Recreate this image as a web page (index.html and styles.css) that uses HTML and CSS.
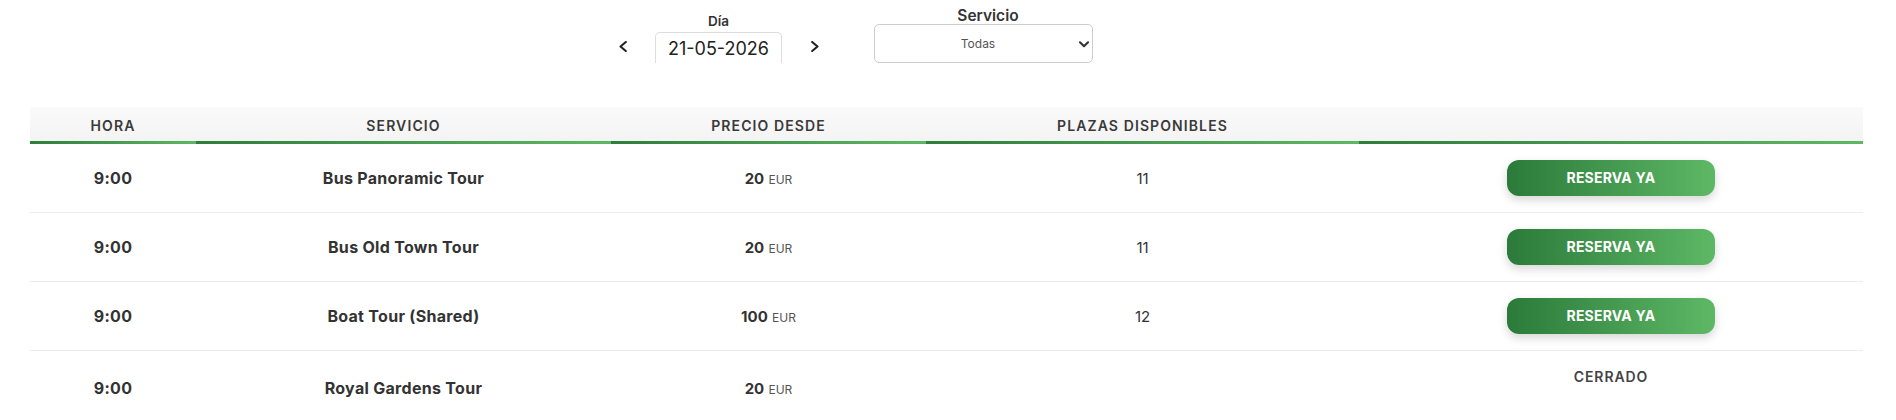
FILE: index.html
```html
<!DOCTYPE html>
<html lang="es">
<head>
<meta charset="utf-8">
<title>Horarios</title>
<link rel="stylesheet" href="styles.css">
</head>
<body>
<div class="filters">
  <div class="day">
    <svg class="arrow" viewBox="0 0 8 11" width="8" height="11"><path d="M6.8 1 L1.5 5.5 L6.8 10" fill="none" stroke="#222" stroke-width="2.1" stroke-linecap="round" stroke-linejoin="round"/></svg>
    <div class="day-col">
      <div class="day-label">Día</div>
      <div class="date-box">21-05-2026</div>
    </div>
    <svg class="arrow" viewBox="0 0 8 11" width="8" height="11"><path d="M1.2 1 L6.5 5.5 L1.2 10" fill="none" stroke="#222" stroke-width="2.1" stroke-linecap="round" stroke-linejoin="round"/></svg>
  </div>
  <div class="service-col">
    <div class="service-label">Servicio</div>
    <div class="select">
      <span class="select-text">Todas</span>
      <svg class="chev" viewBox="0 0 12 7" width="12" height="7"><path d="M2 1.3 L6 5.2 L10 1.3" fill="none" stroke="#333" stroke-width="2.1" stroke-linecap="round" stroke-linejoin="round"/></svg>
    </div>
  </div>
</div>

<table class="schedule">
  <colgroup>
    <col class="c-hora"><col class="c-serv"><col class="c-precio"><col class="c-plazas"><col class="c-accion">
  </colgroup>
  <thead>
    <tr>
      <th>Hora</th>
      <th>Servicio</th>
      <th>Precio desde</th>
      <th>Plazas disponibles</th>
      <th></th>
    </tr>
  </thead>
  <tbody>
    <tr>
      <td class="bold">9:00</td>
      <td class="bold">Bus Panoramic Tour</td>
      <td><span class="amount">20</span> <span class="cur">EUR</span></td>
      <td class="num">11</td>
      <td><a class="btn" href="#">RESERVA YA</a></td>
    </tr>
    <tr>
      <td class="bold">9:00</td>
      <td class="bold">Bus Old Town Tour</td>
      <td><span class="amount">20</span> <span class="cur">EUR</span></td>
      <td class="num">11</td>
      <td><a class="btn" href="#">RESERVA YA</a></td>
    </tr>
    <tr>
      <td class="bold">9:00</td>
      <td class="bold">Boat Tour (Shared)</td>
      <td><span class="amount">100</span> <span class="cur">EUR</span></td>
      <td class="num">12</td>
      <td><a class="btn" href="#">RESERVA YA</a></td>
    </tr>
    <tr class="last">
      <td class="bold">9:00</td>
      <td class="bold">Royal Gardens Tour</td>
      <td><span class="amount">20</span> <span class="cur">EUR</span></td>
      <td class="num"></td>
      <td class="closed">CERRADO</td>
    </tr>
  </tbody>
</table>
</body>
</html>
```

FILE: styles.css
```css
html, body {
  margin: 0;
  padding: 0;
  background: #fff;
}
body {
  font-family: Inter, "Liberation Sans", sans-serif;
  color: #333;
}

/* filters */
.filters {
  display: flex;
  align-items: flex-start;
  height: 107px;
  box-sizing: border-box;
  padding-left: 619px;
}
.day {
  display: flex;
  align-items: flex-start;
}
.arrow {
  display: block;
  margin-top: 41px;
}
.day-col {
  display: flex;
  flex-direction: column;
  align-items: center;
  padding-top: 13px;
  margin: 0 29px 0 28px;
}
.day-label {
  font-size: 13.5px;
  line-height: 16px;
  font-weight: 600;
  color: #333;
  margin-bottom: 3px;
}
.date-box {
  width: 127px;
  height: 31px;
  box-sizing: border-box;
  border: 1px solid #ddd;
  border-bottom: none;
  border-radius: 5px 5px 0 0;
  font-size: 18px;
  line-height: 30px;
  padding-top: 1px;
  text-align: center;
  color: #222;
}
.service-col {
  display: flex;
  flex-direction: column;
  align-items: center;
  padding-top: 9px;
  margin-left: 55px;
}
.service-label {
  font-size: 15.5px;
  line-height: 14px;
  font-weight: 600;
  color: #333;
  margin-left: 9px;
}
.select {
  width: 219px;
  height: 39px;
  margin-top: 1px;
  box-sizing: border-box;
  border: 1px solid #ccc;
  border-radius: 5px;
  display: flex;
  align-items: center;
  padding: 0 2px 0 3px;
}
.select-text {
  flex: 1;
  text-align: center;
  font-size: 12px;
  color: #555;
}
.chev {
  display: block;
  margin-top: 2px;
}

/* table */
.schedule {
  margin-left: 30px;
  width: 1833px;
  table-layout: fixed;
  border-collapse: separate;
  border-spacing: 0;
}
.c-hora { width: 166px; }
.c-serv { width: 415px; }
.c-precio { width: 315px; }
.c-plazas { width: 433px; }
.c-accion { width: 504px; }

.schedule th {
  height: 37px;
  box-sizing: border-box;
  padding: 3px 0 3px;
  font-size: 14px;
  font-weight: 600;
  letter-spacing: 1.1px;
  text-transform: uppercase;
  color: #3a3a3a;
  text-align: center;
  vertical-align: middle;
  background:
    linear-gradient(90deg, #2e7d3c, #5cb862) left bottom / 100% 3px no-repeat,
    linear-gradient(#fafafa, #f3f3f3);
}
.schedule td {
  height: 69px;
  box-sizing: border-box;
  padding: 0;
  border-bottom: 1px solid #ececec;
  text-align: center;
  vertical-align: middle;
  font-size: 15px;
  color: #333;
}
.schedule td.bold {
  font-size: 16px;
  font-weight: 700;
  letter-spacing: 0.3px;
}
.amount {
  font-size: 15px;
  font-weight: 700;
}
.cur {
  font-size: 12px;
  color: #555;
}
.num {
  font-weight: 400;
}
.btn {
  display: inline-block;
  width: 208px;
  height: 36px;
  line-height: 36px;
  border-radius: 12px;
  background: linear-gradient(90deg, #2b7a3a, #5db865);
  color: #fff;
  font-size: 14px;
  font-weight: 700;
  letter-spacing: 0.2px;
  text-decoration: none;
  box-shadow: 0 4px 10px rgba(0, 0, 0, 0.16);
  vertical-align: middle;
}
.schedule tr.last td {
  height: 74px;
  border-bottom: none;
}
.schedule td.closed {
  vertical-align: top;
  padding-top: 17px;
  font-size: 14px;
  font-weight: 600;
  letter-spacing: 0.9px;
  color: #444;
}
```
